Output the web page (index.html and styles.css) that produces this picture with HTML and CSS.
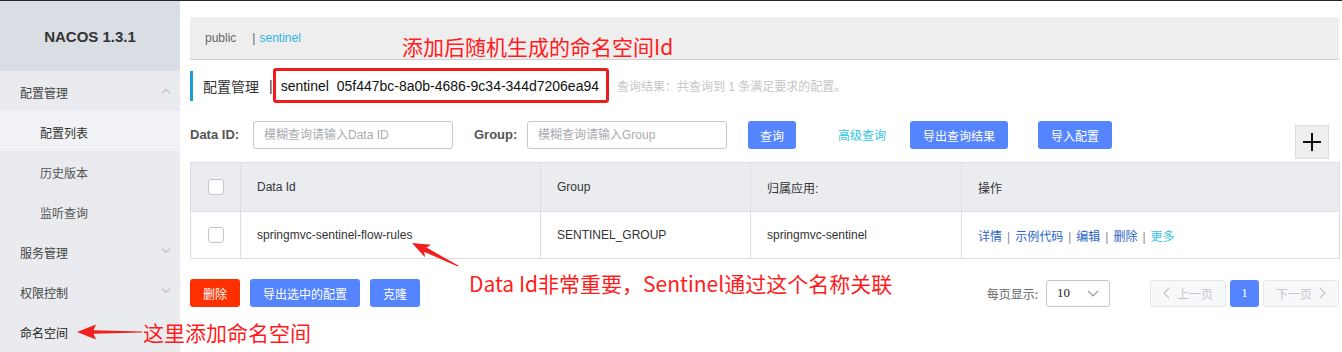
FILE: index.html
```html
<!DOCTYPE html>
<html lang="zh-CN">
<head>
  <meta charset="UTF-8" />
  <title>Nacos 配置管理</title>
  <link rel="stylesheet" href="styles.css">
</head>
<body>
  <div class="layout">
    <aside class="sidebar">
      <div class="brand">NACOS 1.3.1</div>
      <ul class="menu">
        <li class="menu-group">配置管理
          <svg class="chevron" width="10" height="6" viewBox="0 0 10 6"><polyline points="1,5.5 5,1.5 9,5.5" /></svg>
        </li>
        <li class="menu-sub active">配置列表</li>
        <li class="menu-sub">历史版本</li>
        <li class="menu-sub">监听查询</li>
        <li class="menu-group">服务管理
          <svg class="chevron" width="10" height="6" viewBox="0 0 10 6"><polyline points="1,0.5 5,4.5 9,0.5" /></svg>
        </li>
        <li class="menu-group">权限控制
          <svg class="chevron" width="10" height="6" viewBox="0 0 10 6"><polyline points="1,0.5 5,4.5 9,0.5" /></svg>
        </li>
        <li class="menu-group dark">命名空间</li>
      </ul>
    </aside>

    <main class="main">
      <div class="ns-bar">
        <span class="ns-item">public</span>
        <span class="ns-sep">|</span>
        <span class="ns-item current">sentinel</span>
      </div>

      <div class="title-row">
        <span class="title-bar"></span>
        <span class="title-text">配置管理</span>
        <span class="title-sep">|</span>
        <span class="ns-id">sentinel&nbsp;&nbsp;05f447bc-8a0b-4686-9c34-344d7206ea94</span>
        <span class="result-tip">查询结果：共查询到 1 条满足要求的配置。</span>
      </div>

      <div class="search-row">
        <label class="field-label">Data ID:</label>
        <input class="field-input" type="text" placeholder="模糊查询请输入Data ID">
        <label class="field-label group-label">Group:</label>
        <input class="field-input" type="text" placeholder="模糊查询请输入Group">
        <button class="btn btn-primary btn-search">查询</button>
        <span class="btn-link">高级查询</span>
        <button class="btn btn-primary btn-export">导出查询结果</button>
        <button class="btn btn-primary btn-import">导入配置</button>
        <button class="btn-add">
          <svg width="20" height="20" viewBox="0 0 20 20"><path d="M10 1v18M1 10h18" /></svg>
        </button>
      </div>

      <table class="config-table">
        <colgroup>
          <col style="width: 50px">
          <col style="width: 300px">
          <col style="width: 210px">
          <col style="width: 211px">
          <col>
        </colgroup>
        <thead>
          <tr>
            <th class="check-cell"><span class="checkbox"></span></th>
            <th>Data Id</th>
            <th>Group</th>
            <th>归属应用:</th>
            <th>操作</th>
          </tr>
        </thead>
        <tbody>
          <tr>
            <td class="check-cell"><span class="checkbox"></span></td>
            <td>springmvc-sentinel-flow-rules</td>
            <td>SENTINEL_GROUP</td>
            <td>springmvc-sentinel</td>
            <td class="actions">
              <a>详情</a><span class="sep">|</span><a>示例代码</a><span class="sep">|</span><a>编辑</a><span class="sep">|</span><a>删除</a><span class="sep">|</span><a class="more">更多</a>
            </td>
          </tr>
        </tbody>
      </table>

      <div class="footer-row">
        <button class="btn btn-danger">删除</button>
        <button class="btn btn-primary">导出选中的配置</button>
        <button class="btn btn-primary">克隆</button>

        <div class="pager">
          <span class="pager-label">每页显示:</span>
          <div class="page-size">
            <span>10</span>
            <svg width="12" height="7" viewBox="0 0 12 7"><polyline points="1,1 6,6 11,1" /></svg>
          </div>
          <span class="page-btn prev">
            <svg width="7" height="12" viewBox="0 0 7 12"><polyline points="6,1 1,6 6,11" /></svg>
            上一页
          </span>
          <span class="page-num">1</span>
          <span class="page-btn next">
            下一页
            <svg width="7" height="12" viewBox="0 0 7 12"><polyline points="1,1 6,6 1,11" /></svg>
          </span>
        </div>
      </div>
    </main>
  </div>

  <!-- annotations drawn over the screenshot -->
  <div class="notes">
    <svg class="arrows" width="1342" height="352" viewBox="0 0 1342 352">
      <polygon points="412,243 431.2,244.8 426.5,247.5 458.2,265.6 457.8,266.4 424.3,251.9 425,257.3" />
      <polygon points="77,332 96,324.5 93.5,330.3 142,331.5 142,332.5 93.5,333.7 96,339.5" />
    </svg>
    <span class="note note-ns">添加后随机生成的命名空间Id</span>
    <span class="note note-dataid">Data Id非常重要，Sentinel通过这个名称关联</span>
    <span class="note note-menu">这里添加命名空间</span>
  </div>
</body>
</html>
```

FILE: styles.css
```css
body {
  margin: 0;
  border-top: 1px solid #262626;
  font-family: "Liberation Sans", "Noto Sans CJK SC", sans-serif;
  font-size: 12px;
  color: #333;
  background-color: #fff;
  height: 351px;
  overflow: hidden;
}

.layout {
  display: flex;
  height: 351px;
}

/* sidebar */
.sidebar {
  width: 180px;
  flex-shrink: 0;
  background-color: #e9ebef;
}

.brand {
  height: 70px;
  background-color: #d9dde4;
  display: flex;
  align-items: center;
  justify-content: center;
  font-weight: bold;
  font-size: 15px;
  color: #333;
}

.menu {
  list-style: none;
  margin: 0;
  padding: 0;
}

.menu li {
  height: 40px;
  box-sizing: border-box;
  display: flex;
  align-items: center;
  justify-content: space-between;
  padding: 3px 9px 0 20px;
  font-size: 12px;
  color: #444;
}

.menu .menu-sub {
  padding-left: 40px;
  color: #555;
}

.menu .menu-sub.active {
  background-color: #f1f2f5;
  color: #333;
}

.menu .dark {
  color: #222;
}

.chevron {
  margin-top: -3px;
}

.chevron polyline {
  fill: none;
  stroke: #a0a3a8;
  stroke-width: 1;
}

/* main area */
.main {
  flex: 1;
  min-width: 0;
  padding: 0 2px 0 10px;
}

.ns-bar {
  margin-top: 16px;
  margin-right: 1px;
  height: 42px;
  background-color: #eeeeee;
  border-bottom: 1px solid #cfcfcf;
  display: flex;
  align-items: center;
  padding-left: 15px;
}

.ns-item {
  color: #666;
}

.ns-sep {
  color: #666;
  margin-left: 16px;
}

.ns-item.current {
  color: #2fb3e3;
  margin-left: 4px;
}

.title-row {
  margin-top: 8px;
  height: 35px;
  display: flex;
  align-items: center;
}

.title-bar {
  width: 3px;
  height: 30px;
  background-color: #1a9ed6;
  margin-right: 10px;
}

.title-text {
  font-family: "Noto Sans CJK SC", sans-serif;
  font-size: 14px;
  color: #333;
}

.title-sep {
  font-size: 14px;
  margin-left: 10px;
  color: #333;
}

.ns-id {
  height: 35px;
  box-sizing: border-box;
  display: flex;
  align-items: center;
  padding: 0 7px 0 5px;
  border: 3px solid #f01c1c;
  border-radius: 3px;
  font-size: 14px;
  color: #111;
}

.result-tip {
  margin-left: 8px;
  color: #c6c6c6;
}

/* search row */
.search-row {
  margin-top: 18px;
  display: flex;
  align-items: flex-start;
}

.field-label {
  height: 28px;
  line-height: 28px;
  font-weight: bold;
  font-size: 13px;
  color: #555;
  width: 63px;
}

.group-label {
  margin-left: 21px;
  width: 53px;
}

.field-input {
  width: 200px;
  height: 28px;
  box-sizing: border-box;
  border: 1px solid #c4c6cf;
  border-radius: 3px;
  padding: 0 10px;
  font-family: "Liberation Sans", "Noto Sans CJK SC", sans-serif;
  font-size: 12px;
  outline: none;
}

.field-input::placeholder {
  color: #a9abb2;
}

.btn {
  height: 28px;
  border: none;
  border-radius: 3px;
  padding: 0 13px;
  font-family: "Noto Sans CJK SC", sans-serif;
  font-size: 12px;
  color: #fff;
  cursor: pointer;
}

.btn-primary {
  background-color: #5584ff;
}

.btn-danger {
  background-color: #ff3000;
}

.btn-search {
  margin-left: 21px;
  padding: 0 12px;
}

.btn-link {
  height: 28px;
  line-height: 28px;
  margin-left: 42px;
  color: #33c3e6;
  font-family: "Noto Sans CJK SC", sans-serif;
}

.btn-export {
  margin-left: 24px;
}

.btn-import {
  margin-left: 30px;
}

.btn-add {
  margin: 4px 11px 0 auto;
  width: 34px;
  height: 34px;
  padding: 0;
  background-color: #eeeeee;
  border: 1px solid #dcdcdc;
  display: flex;
  align-items: center;
  justify-content: center;
}

.btn-add path {
  stroke: #111;
  stroke-width: 2;
}

/* table */
.config-table {
  width: 100%;
  margin-top: 3px;
  border-collapse: collapse;
  table-layout: fixed;
}

.config-table th,
.config-table td {
  border: 1px solid #dcdee3;
  padding: 0 16px;
  text-align: left;
  font-weight: normal;
  font-size: 12px;
  color: #333;
}

.config-table th {
  background-color: #ebecf0;
  height: 48px;
}

.config-table td {
  height: 46px;
}

.config-table .check-cell {
  padding: 0;
  text-align: center;
}

.checkbox {
  display: inline-block;
  width: 16px;
  height: 16px;
  box-sizing: border-box;
  border: 1px solid #c4c6cf;
  border-radius: 3px;
  background-color: #fff;
  vertical-align: middle;
}

.actions a {
  color: #2a64c6;
  font-family: "Noto Sans CJK SC", sans-serif;
}

.actions a.more {
  color: #33c3e6;
}

.actions .sep {
  color: #8a8a8a;
  margin: 0 5px;
}

/* footer */
.footer-row {
  margin-top: 20px;
  display: flex;
  align-items: center;
  gap: 10px;
}

.pager {
  margin-left: auto;
  margin-right: 1px;
  display: flex;
  align-items: center;
}

.pager-label {
  color: #666;
  font-family: "Noto Sans CJK SC", sans-serif;
  margin-right: 8px;
}

.page-size {
  width: 64px;
  height: 27px;
  box-sizing: border-box;
  border: 1px solid #c4c6cf;
  border-radius: 3px;
  display: flex;
  align-items: center;
  justify-content: space-between;
  padding: 0 10px;
  color: #222;
  font-family: "Liberation Serif", serif;
  font-size: 13px;
}

.page-size polyline,
.page-btn polyline {
  fill: none;
  stroke: #9a9ca3;
  stroke-width: 1.2;
}

.page-btn polyline {
  stroke: #c4c6cf;
}

.page-btn {
  height: 27px;
  box-sizing: border-box;
  border: 1px solid #e6e7eb;
  border-radius: 3px;
  background-color: #f7f8fa;
  color: #c4c6cf;
  display: flex;
  align-items: center;
  gap: 7px;
  padding: 0 12px;
  font-family: "Noto Sans CJK SC", sans-serif;
}

.page-btn.prev {
  margin-left: 40px;
}

.page-num {
  width: 29px;
  height: 27px;
  margin: 0 4px;
  border-radius: 3px;
  background-color: #5584ff;
  color: #fff;
  display: flex;
  align-items: center;
  justify-content: center;
  font-family: "Liberation Serif", serif;
  font-size: 13px;
}

/* annotations */
.notes {
  position: absolute;
  left: 0;
  top: 0;
  width: 1342px;
  height: 352px;
  pointer-events: none;
}

.arrows {
  position: absolute;
  left: 0;
  top: 0;
}

.arrows polygon {
  fill: #f0201c;
}

.note {
  position: absolute;
  color: #ff1c1c;
  font-family: "Noto Sans CJK SC", sans-serif;
  font-size: 21px;
  line-height: 24px;
  white-space: nowrap;
}

.note-ns {
  left: 402px;
  top: 34px;
}

.note-dataid {
  left: 469px;
  top: 271px;
}

.note-menu {
  left: 143px;
  top: 320px;
}
```
